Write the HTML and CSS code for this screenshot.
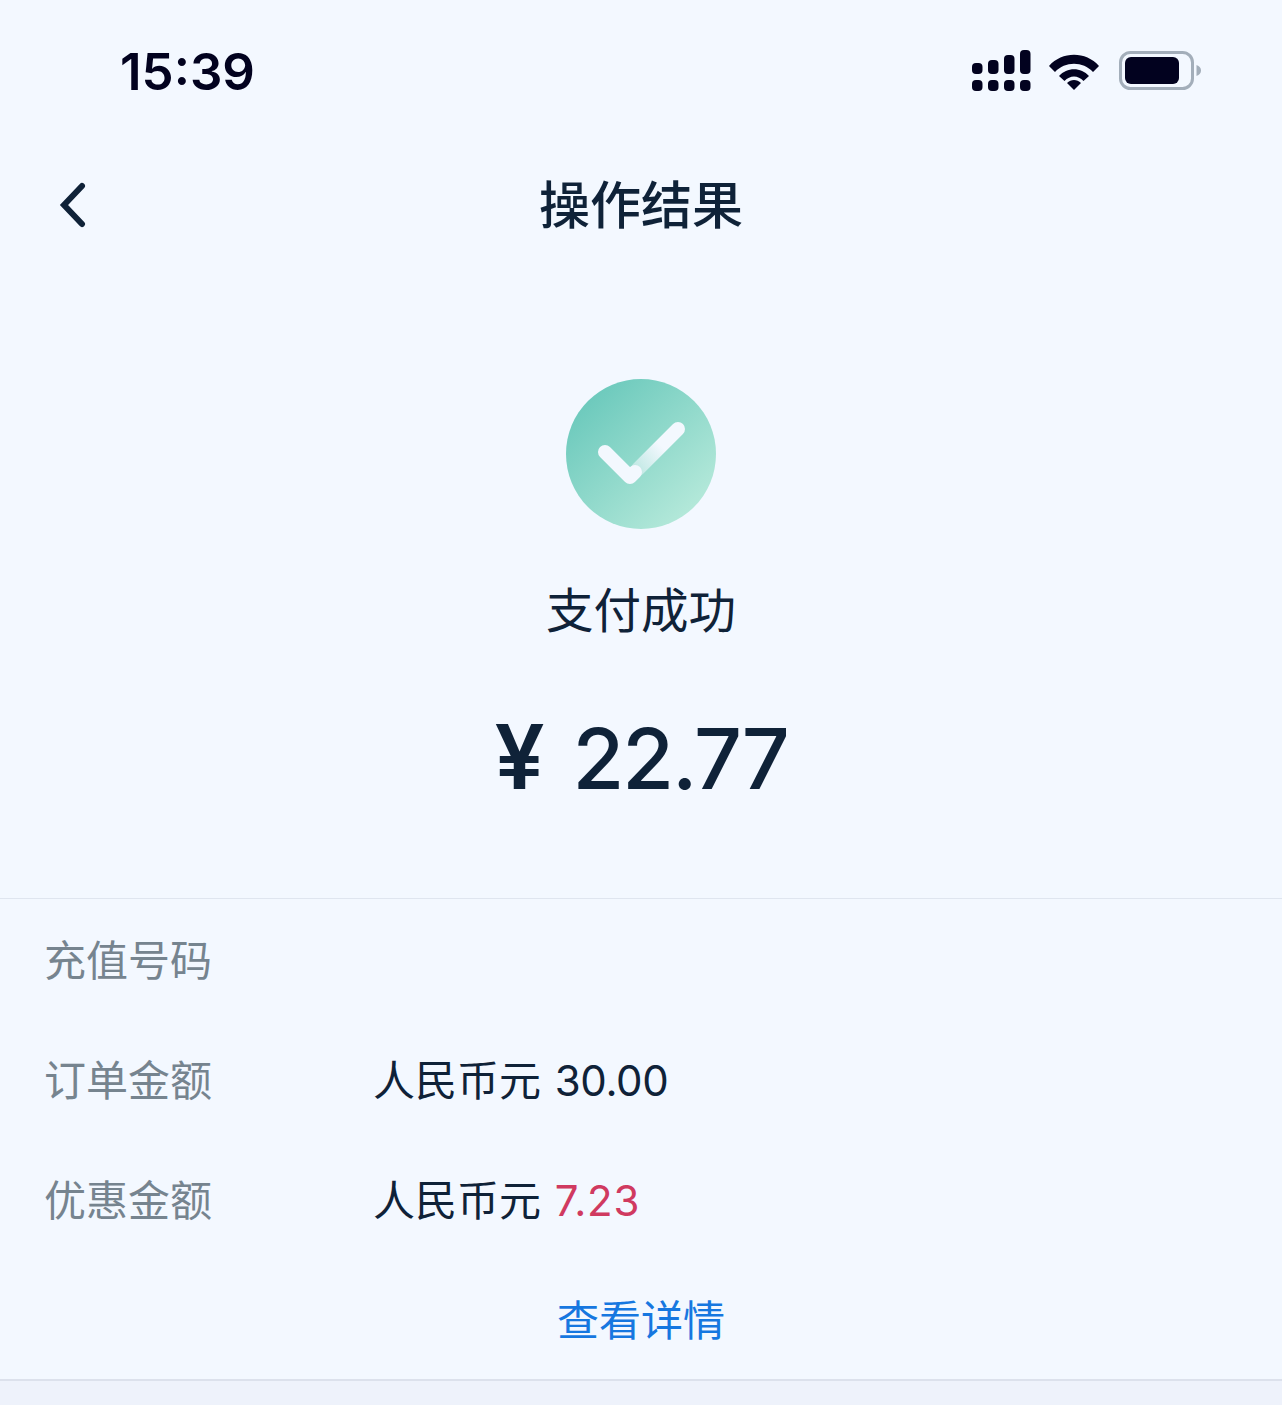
FILE: index.html
```html
<!DOCTYPE html>
<html lang="zh-CN">
  <head>
    <meta charset="UTF-8" />
    <meta name="viewport" content="width=device-width, initial-scale=1.0" />
    <title>操作结果</title>
    <link rel="stylesheet" href="styles.css">
  </head>

  <body>
    <div class="statusbar">
      <span class="time">15:39</span>
      <div class="status-icons">
        <svg class="signal" width="60" height="41" viewBox="0 0 60 41" fill="#02021f">
          <rect x="0" y="13" width="10.500" height="11" rx="4" />
          <rect x="16" y="10" width="10.500" height="14" rx="4" />
          <rect x="32" y="5" width="10.500" height="19" rx="4" />
          <rect x="48" y="0" width="10.500" height="24" rx="4" />
          <rect x="0" y="30" width="10.500" height="11" rx="4" />
          <rect x="16" y="30" width="10.500" height="11" rx="4" />
          <rect x="32" y="30" width="10.500" height="11" rx="4" />
          <rect x="48" y="30" width="10.500" height="11" rx="4" />
        </svg>
        <svg class="wifi" width="52" height="38" viewBox="0 0 52 38" fill="#02021f">
          <path d="M1 14 C14 -1 38 -1 51 14 L45 20 C35 9 17 9 7 20 Z" />
          <path d="M11 24 C19 15 33 15 41 24 L35.500 29 C30 23 22 23 16.500 29 Z" />
          <path d="M19 31 C23 27 29 27 33 31 L26 38 Z" />
        </svg>
        <svg class="battery" width="83" height="40" viewBox="0 0 83 40">
          <rect x="1.500" y="1.500" width="72" height="36" rx="10" fill="none" stroke="#a3aeba" stroke-width="3" />
          <rect x="6" y="6" width="54" height="27" rx="6" fill="#02021f" />
          <path d="M77.500 14 C80.500 15 82 17 82 19.500 C82 22 80.500 24 77.500 25 Z" fill="#a3aeba" />
        </svg>
      </div>
    </div>

    <div class="navbar">
      <svg class="back" width="30" height="48" viewBox="0 0 30 48" fill="none">
        <path d="M25 6 L7 25 L25 44" stroke="#0f2238" stroke-width="6" stroke-linecap="round" stroke-linejoin="miter" />
      </svg>
      <h1 class="nav-title">操作结果</h1>
    </div>

    <div class="result">
      <svg class="check" width="150" height="150" viewBox="0 0 150 150">
        <defs>
          <linearGradient id="circleFill" x1="0.1" y1="0.1" x2="0.85" y2="0.9">
            <stop offset="0" stop-color="#69c8bb" />
            <stop offset="1" stop-color="#b5e9da" />
          </linearGradient>
          <linearGradient id="tickFade" gradientUnits="userSpaceOnUse" x1="112" y1="50" x2="70" y2="92">
            <stop offset="0.4" stop-color="#f3f8fe" />
            <stop offset="1" stop-color="#f3f8fe" stop-opacity="0.45" />
          </linearGradient>
        </defs>
        <circle cx="75" cy="75" r="75" fill="url(#circleFill)" />
        <path d="M112 50 L72 90" stroke="url(#tickFade)" stroke-width="14" stroke-linecap="round" />
        <path d="M39 73 L64 98 L69 93" fill="none" stroke="#f3f8fe" stroke-width="14" stroke-linecap="round" stroke-linejoin="round" />
      </svg>
      <p class="result-text">支付成功</p>
      <p class="amount"><span class="currency">¥</span>22.77</p>
    </div>

    <div class="details">
      <div class="row">
        <span class="row-label">充值号码</span>
      </div>
      <div class="row">
        <span class="row-label">订单金额</span>
        <span class="row-value">人民币元 <span class="price">30.00</span></span>
      </div>
      <div class="row">
        <span class="row-label">优惠金额</span>
        <span class="row-value">人民币元 <span class="discount">7.23</span></span>
      </div>
      <a class="more">查看详情</a>
    </div>

    <div class="footer"></div>
  </body>
</html>
```

FILE: styles.css
```css
html,
body {
  margin: 0;
  padding: 0;
  height: 1405px;
  overflow: hidden;
}

body {
  background-color: #f3f8ff;
  color: #0f2238;
  font-family: "Inter", "Noto Sans CJK SC", sans-serif;
  display: flex;
  flex-direction: column;
}

.statusbar {
  height: 140px;
  box-sizing: border-box;
  padding: 1px 80px 0 120px;
  display: flex;
  justify-content: space-between;
  align-items: center;
}

.time {
  margin-top: 2px;
  font-size: 51px;
  font-weight: 600;
  color: #02021f;
}

.status-icons {
  display: flex;
  align-items: center;
  gap: 18px;
}

.wifi {
  margin-left: -2px;
  margin-right: 1px;
}

.navbar {
  height: 130px;
  box-sizing: border-box;
  padding-bottom: 6px;
  position: relative;
  display: flex;
  justify-content: center;
  align-items: center;
}

.back {
  position: absolute;
  left: 57px;
  top: 40px;
}

.nav-title {
  margin: 0;
  font-size: 51px;
  font-weight: 500;
  font-family: "Noto Sans CJK SC", sans-serif;
}

.result {
  height: 629px;
  box-sizing: border-box;
  padding-top: 109px;
  border-bottom: 1px solid #dfe5ef;
  display: flex;
  flex-direction: column;
  align-items: center;
}

.result-text {
  margin: 45px 0 0;
  font-size: 47.500px;
  line-height: 68px;
  font-family: "Noto Sans CJK SC", sans-serif;
}

.amount {
  margin: 65px 0 0;
  font-size: 84px;
  line-height: 100px;
  font-weight: 500;
  letter-spacing: -2px;
}

.currency {
  margin-right: 30px;
  font-size: 89px;
  font-weight: 600;
}

.details {
  height: 482px;
  box-sizing: border-box;
  border-bottom: 2px solid #dce1ec;
  font-size: 42px;
}

.row {
  height: 120px;
  box-sizing: border-box;
  padding: 0 0 4px 44px;
  display: flex;
  align-items: center;
}

.row-label {
  width: 329px;
  color: #76848f;
}

.row-value {
  color: #0f2238;
  word-spacing: 2px;
}

.price {
  letter-spacing: -0.400px;
}

.discount {
  color: #d03a60;
  letter-spacing: 0.800px;
}

.more {
  display: block;
  text-align: center;
  line-height: 124px;
  color: #1677e0;
}

.footer {
  flex: 1;
  background-color: #eef2fb;
}
```
